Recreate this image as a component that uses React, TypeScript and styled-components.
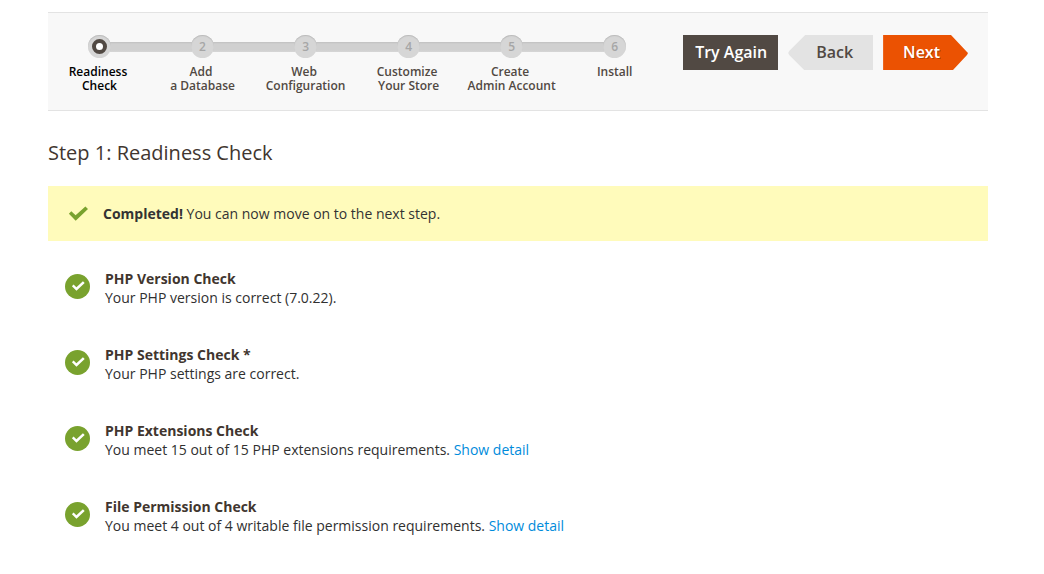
import React from 'react';
import styled, { createGlobalStyle, css } from 'styled-components';

const GlobalStyle = createGlobalStyle`
  *, *::before, *::after { box-sizing: border-box; }
  body {
    margin: 0;
    background: #fff;
    color: #303030;
    font-family: 'Open Sans', 'Noto Sans', sans-serif;
    font-size: 14px;
    line-height: 19px;
  }
`;

const Page = styled.div`
  padding: 12px 56px 24px 48px;
`;

const Toolbar = styled.header`
  display: flex;
  align-items: flex-start;
  gap: 17px;
  padding: 22px 20px 17px 0;
  background: #f8f8f8;
  border-top: 1px solid #e3e3e3;
  border-bottom: 1px solid #e3e3e3;
`;

const Steps = styled.ol`
  flex: 1;
  display: flex;
  margin: 0;
  padding: 0;
  list-style: none;
`;

const Step = styled.li<{ $active: boolean }>`
  flex: 1 1 0;
  color: ${(p) => (p.$active ? '#000' : '#514943')};
  font-size: 12px;
  font-weight: 600;
  line-height: 14px;
  text-align: center;
`;

const StepLabel = styled.span`
  display: block;
  white-space: pre-line;
`;

const Marker = styled.div`
  display: flex;
  align-items: center;
  margin-bottom: 7px;
`;

const Track = styled.span<{ $hidden: boolean }>`
  flex: 1;
  height: 10px;
  background: linear-gradient(#c0c0c0 0, #d0d0d0 2px, #d0d0d0 8px, #d6d6d6 10px);
  visibility: ${(p) => (p.$hidden ? 'hidden' : 'visible')};
`;

const Dot = styled.span<{ $active: boolean }>`
  display: flex;
  align-items: center;
  justify-content: center;
  width: 23px;
  height: 23px;
  margin: 0 -1px;
  border-radius: 50%;
  background: #d6d6d6;
  box-shadow: inset 0 1px 1px #bbb;
  color: #a6a6a6;
  z-index: 1;
  ${(p) =>
    p.$active &&
    css`
      &::before {
        content: '';
        width: 15px;
        height: 15px;
        border: 4px solid #514943;
        border-radius: 50%;
        background: #fff;
      }
    `}
`;

const Actions = styled.div`
  display: flex;
  gap: 10px;
`;

const Button = styled.button`
  height: 35px;
  padding: 0 11px 0 12px;
  border: 0;
  background: #514943;
  color: #fff;
  font: 600 16px/35px 'Open Sans', 'Noto Sans', sans-serif;
  white-space: nowrap;
  cursor: pointer;
`;

const BackButton = styled(Button)`
  padding: 0 20px 0 28px;
  background: #e3e3e3;
  color: #514943;
  clip-path: polygon(17px 0, 100% 0, 100% 100%, 16px 100%, 1px 20px, 0 18px, 1px 16px);
`;

const NextButton = styled(Button)`
  padding: 0 28px 0 20px;
  background: #eb5202;
  text-shadow: 1px 1px 0 rgba(0, 0, 0, 0.25);
  clip-path: polygon(
    0 0,
    calc(100% - 17px) 0,
    calc(100% - 1px) 17px,
    100% 18px,
    calc(100% - 1px) 20px,
    calc(100% - 15px) 100%,
    0 100%
  );
`;

const Title = styled.h1`
  margin: 28px 0 19px;
  color: #41362f;
  font-size: 20px;
  font-weight: 400;
  line-height: 28px;
`;

const Message = styled.div`
  display: flex;
  align-items: center;
  gap: 15px;
  padding: 18px 20px;
  background: #fffbbb;
  color: #333;
`;

const Checks = styled.ul`
  display: flex;
  flex-direction: column;
  gap: 38px;
  margin: 28px 0 0;
  padding: 0 17px;
  list-style: none;
`;

const Check = styled.li`
  display: flex;
  gap: 15px;
`;

const Badge = styled.span`
  display: flex;
  flex: none;
  justify-content: center;
  width: 25px;
  height: 25px;
  margin-top: 5px;
  padding-top: 7px;
  border-radius: 50%;
  background: #79a22e;
`;

const CheckTitle = styled.h2`
  margin: 0;
  color: #41362f;
  font-size: 14px;
  font-weight: 700;
  line-height: 19px;
`;

const Text = styled.p`
  margin: 0;
`;

const Link = styled.a`
  color: #008bdb;
  text-decoration: none;
`;

const STEPS: string[] = [
  'Readiness\u00a0\nCheck',
  'Add\u00a0\na Database',
  'Web\u00a0\nConfiguration',
  'Customize\u00a0\nYour Store',
  'Create\u00a0\nAdmin Account',
  'Install',
];

const CHECKS = [
  { title: 'PHP Version Check', text: 'Your PHP version is correct (7.0.22).', detail: false },
  { title: 'PHP Settings Check *', text: 'Your PHP settings are correct.', detail: false },
  { title: 'PHP Extensions Check', text: 'You meet 15 out of 15 PHP extensions requirements.', detail: true },
  { title: 'File Permission Check', text: 'You meet 4 out of 4 writable file permission requirements.', detail: true },
];

function Tick({ width, height, color }: { width: number; height: number; color: string }) {
  return (
    <svg width={width} height={height} viewBox="0 0 20 15" aria-hidden="true">
      <path d="M0.9 7.8 3.3 5.3 7.6 9.2 17.4 0.4 20 3 7.7 14.8Z" fill={color} />
    </svg>
  );
}

export default function App() {
  return (
    <Page>
      <GlobalStyle />
      <Toolbar>
        <Steps>
          {STEPS.map((label, i) => (
            <Step key={label} $active={i === 0} aria-current={i === 0 ? 'step' : undefined}>
              <Marker>
                <Track $hidden={i === 0} />
                <Dot $active={i === 0}>{i > 0 && i + 1}</Dot>
                <Track $hidden={i === STEPS.length - 1} />
              </Marker>
              <StepLabel>{label}</StepLabel>
            </Step>
          ))}
        </Steps>
        <Actions>
          <Button type="button">Try Again</Button>
          <BackButton type="button">Back</BackButton>
          <NextButton type="button">Next</NextButton>
        </Actions>
      </Toolbar>
      <main>
        <Title>Step 1: Readiness Check</Title>
        <Message role="status">
          <Tick width={20} height={15} color="#79a22e" />
          <span>
            <strong>Completed!</strong> You can now move on to the next step.
          </span>
        </Message>
        <Checks>
          {CHECKS.map((c) => (
            <Check key={c.title}>
              <Badge>
                <Tick width={14} height={10} color="#fff" />
              </Badge>
              <div>
                <CheckTitle>{c.title}</CheckTitle>
                <Text>
                  {c.text} {c.detail && <Link href="#">Show detail</Link>}
                </Text>
              </div>
            </Check>
          ))}
        </Checks>
      </main>
    </Page>
  );
}
